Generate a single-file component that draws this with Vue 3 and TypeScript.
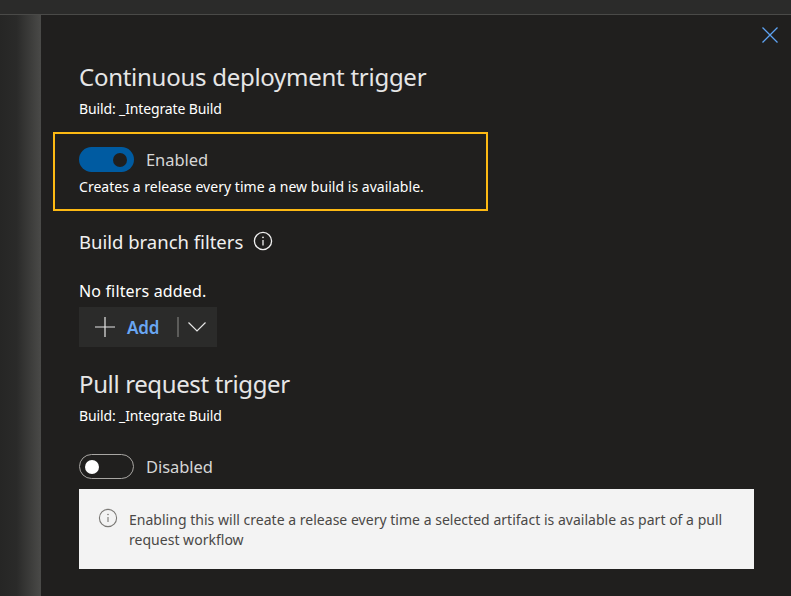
<script setup lang="ts">
const sans = "Noto Sans";
void sans;
</script>

<template>
  <div class="page">
    <div class="topbar"></div>
    <div class="main">
      <div class="strip"></div>
      <div class="panel">
        <button class="close" aria-label="Close">
          <svg width="16" height="16" viewBox="0 0 16 16"><path d="M0.5 0.5 15.5 15.5M15.5 0.5 0.5 15.5" stroke="#5ea3f2" stroke-width="1.3" fill="none"/></svg>
        </button>
        <h2 class="title first">Continuous deployment trigger</h2>
        <div class="sub">Build: _Integrate Build</div>
        <div class="highlight">
          <div class="toggle-row">
            <span class="toggle on"><span class="knob"></span></span>
            <span class="toggle-label">Enabled</span>
          </div>
          <div class="desc">Creates a release every time a new build is available.</div>
        </div>
        <div class="filters">
          <span>Build branch filters</span>
          <svg width="20" height="20" viewBox="0 0 20 20"><circle cx="10" cy="10" r="8.6" stroke="#f0f0f0" stroke-width="1.3" fill="none"/><path d="M10 9v5.5" stroke="#f0f0f0" stroke-width="1.3"/><circle cx="10" cy="6.3" r="0.9" fill="#f0f0f0"/></svg>
        </div>
        <div class="none">No filters added.</div>
        <div class="add">
          <svg class="plus" width="20" height="20" viewBox="0 0 20 20"><path d="M10 0v20M0 10h20" stroke="#e6e6e6" stroke-width="1.2"/></svg>
          <span class="add-text">Add</span>
          <span class="sep"></span>
          <svg width="18" height="10" viewBox="0 0 18 10"><path d="M0.5 0.5 9 9 17.5 0.5" stroke="#e6e6e6" stroke-width="1.2" fill="none"/></svg>
        </div>
        <h2 class="title second">Pull request trigger</h2>
        <div class="sub">Build: _Integrate Build</div>
        <div class="toggle-row off-row">
          <span class="toggle off"><span class="knob"></span></span>
          <span class="toggle-label">Disabled</span>
        </div>
        <div class="notice">
          <svg class="notice-icon" width="20" height="20" viewBox="0 0 20 20"><circle cx="10" cy="10" r="8.6" stroke="#7a7875" stroke-width="1.1" fill="none"/><path d="M10 9v5" stroke="#7a7875" stroke-width="1.1"/><circle cx="10" cy="6.5" r="0.8" fill="#7a7875"/></svg>
          <div class="notice-text">Enabling this will create a release every time a selected artifact is available as part of a pull request workflow</div>
        </div>
      </div>
    </div>
  </div>
</template>

<style>
html, body { margin: 0; background: #201f1e; }
</style>

<style scoped>
.page { width: 791px; height: 596px; overflow: hidden; display: flex; flex-direction: column; font-family: "Noto Sans", "Open Sans", sans-serif; color: #fff; background: #201f1e; }
.topbar { height: 14px; flex: none; background: #2b2b2a; border-bottom: 1px solid #4a4a48; }
.main { flex: 1; display: flex; min-height: 0; }
.strip { width: 41px; flex: none; background: linear-gradient(90deg, #262625 0%, #2a2a29 40%, #4a4a48 100%); }
.panel { flex: 1; position: relative; padding: 0 37px 0 38px; background: #201f1e; }
.close { position: absolute; top: 12px; right: 13px; width: 16px; height: 16px; padding: 0; border: 0; background: none; display: block; }
.close svg { display: block; }
.title { margin: 0; font-weight: 400; font-size: 24px; line-height: 32px; color: #e6e6e6; letter-spacing: -0.27px; }
.first { margin-top: 46px; }
.second { margin-top: 21px; letter-spacing: -0.37px; }
.sub { margin-top: 6px; font-size: 14px; line-height: 20px; letter-spacing: -0.13px; }
.highlight { margin: 13px 0 0 -26px; width: 435px; height: 79px; box-sizing: border-box; border: 2px solid #fdb913; padding: 13px 24px 0; }
.toggle-row { display: flex; align-items: center; gap: 12px; height: 25px; }
.toggle { width: 55px; height: 25px; box-sizing: border-box; border-radius: 13px; display: flex; align-items: center; flex: none; }
.toggle.on { background: #005ba1; justify-content: flex-end; padding-right: 7px; }
.toggle.on .knob { background: #201f1e; }
.toggle.off { border: 1px solid #a8a6a3; padding-left: 5px; }
.toggle.off .knob { background: #fff; }
.knob { width: 14px; height: 14px; border-radius: 50%; display: block; }
.toggle-label { font-size: 16.5px; color: #d6d6d6; letter-spacing: -0.05px; }
.desc { font-size: 14px; line-height: 20px; margin-top: 5px; letter-spacing: 0.03px; white-space: nowrap; }
.filters { margin-top: 18px; display: flex; align-items: center; gap: 10px; height: 24px; font-size: 18.5px; color: #f0f0f0; }
.none { margin-top: 27px; font-size: 16px; line-height: 22px; letter-spacing: 0.15px; }
.add { margin-top: 5px; width: 138px; height: 40px; background: #2b2b2a; display: flex; align-items: center; box-sizing: border-box; padding-left: 16px; }
.plus { flex: none; }
.add-text { margin-left: 12px; font-size: 17px; font-weight: 600; color: #69a6f2; letter-spacing: -0.1px; }
.sep { width: 2px; height: 20px; background: #5c5c5a; margin: 0 9px 0 18px; }
.off-row { margin-top: 28px; }
.notice { margin-top: 10px; width: 675px; height: 80px; box-sizing: border-box; background: #f3f3f3; padding: 19px 20px 0 19px; display: flex; gap: 11px; color: #4a4846; }
.notice-icon { flex: none; }
.notice-text { margin-top: 2px; font-size: 14px; line-height: 20px; letter-spacing: 0.02px; }
</style>
